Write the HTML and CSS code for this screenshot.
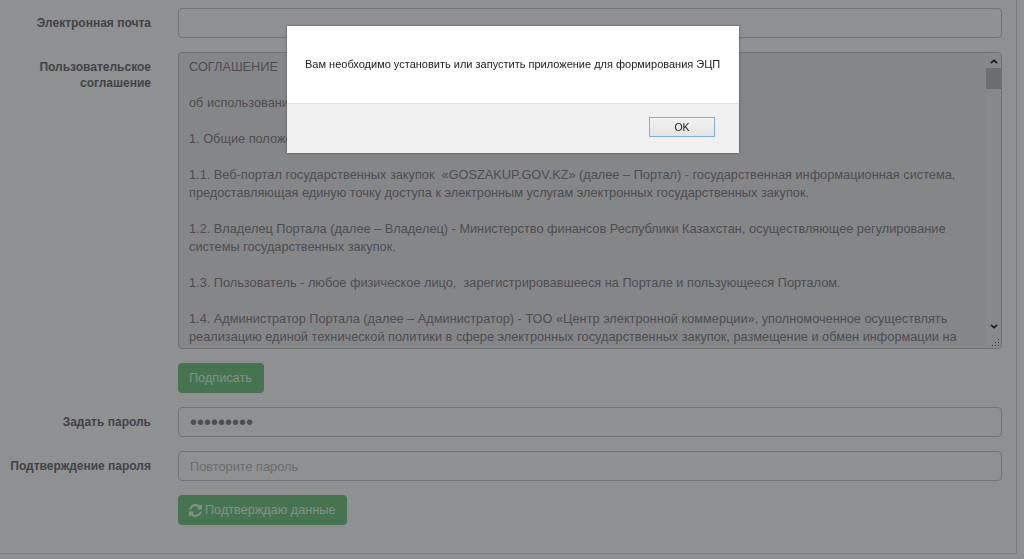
FILE: index.html
```html
<!DOCTYPE html>
<html lang="ru">
<head>
    <meta charset="UTF-8">
    <title>Регистрация</title>
    <link rel="stylesheet" href="styles.css">
</head>
<body>
    <div class="panel">
        <form class="regForm">

            <div class="formRow">
                <label class="rowLabel">Электронная почта</label>
                <input type="text" class="field">
            </div>

            <div class="formRow">
                <label class="rowLabel">Пользовательское соглашение</label>
                <div class="agreement">
                    <div class="agreementText">
                        <p>СОГЛАШЕНИЕ</p>
                        <p>об использовании веб-портала государственных закупок</p>
                        <p>1. Общие положения</p>
                        <p>1.1. Веб-портал государственных закупок &nbsp;«GOSZAKUP.GOV.KZ» (далее – Портал) - государственная информационная система, предоставляющая единую точку доступа к электронным услугам электронных государственных закупок.</p>
                        <p>1.2. Владелец Портала (далее – Владелец) - Министерство финансов Республики Казахстан, осуществляющее регулирование системы государственных закупок.</p>
                        <p>1.3. Пользователь - любое физическое лицо, &nbsp;зарегистрировавшееся на Портале и пользующееся Порталом.</p>
                        <p>1.4. Администратор Портала (далее – Администратор) - ТОО «Центр электронной коммерции», уполномоченное осуществлять реализацию единой технической политики в сфере электронных государственных закупок, размещение и обмен информации на</p>
                    </div>
                    <div class="scrollBar">
                        <svg class="scrollArrow" viewBox="0 0 10 6"><path d="M1 5l4-3.5L9 5" fill="none" stroke="#333" stroke-width="2"/></svg>
                        <div class="scrollThumb"></div>
                        <svg class="scrollArrow arrowDown" viewBox="0 0 10 6"><path d="M1 1l4 3.5L9 1" fill="none" stroke="#333" stroke-width="2"/></svg>
                        <svg class="resizeGrip" viewBox="0 0 9 9"><path d="M7 1h1v1H7zM4 4h1v1H4zM7 4h1v1H7zM1 7h1v1H1zM4 7h1v1H4zM7 7h1v1H7z" fill="#666"/></svg>
                    </div>
                </div>
            </div>

            <div class="formRow">
                <span class="rowLabel"></span>
                <button type="button" class="btnGreen">Подписать</button>
            </div>

            <div class="formRow">
                <label class="rowLabel">Задать пароль</label>
                <input type="password" class="field fieldSecret" value="123456789">
            </div>

            <div class="formRow">
                <label class="rowLabel">Подтверждение пароля</label>
                <input type="password" class="field" placeholder="Повторите пароль">
            </div>

            <div class="formRow">
                <span class="rowLabel"></span>
                <button type="button" class="btnGreen">
                    <svg class="refreshIcon" viewBox="0 0 1536 1536"><path fill="currentColor" d="M1511 928q0 5-1 7-64 268-268 434.5t-478 166.5q-146 0-282.5-55t-243.5-157l-129 129q-19 19-45 19t-45-19-19-45v-448q0-26 19-45t45-19h448q26 0 45 19t19 45-19 45l-137 137q71 66 161 102t187 36q134 0 250-65t186-179q11-17 53-117 8-23 30-23h192q13 0 22.5 9.5t9.5 22.5zm25-800v448q0 26-19 45t-45 19h-448q-26 0-45-19t-19-45 19-45l138-138q-148-137-349-137-134 0-250 65t-186 179q-11 17-53 117-8 23-30 23h-199q-13 0-22.5-9.5t-9.5-22.5v-7q65-268 270-434.5t480-166.5q146 0 284 55.5t245 156.5l130-129q19-19 45-19t45 19 19 45z"/></svg>
                    Подтверждаю данные
                </button>
            </div>

        </form>
    </div>

    <div class="backdrop"></div>

    <div class="modal">
        <div class="modalBody">Вам необходимо установить или запустить приложение для формирования ЭЦП</div>
        <div class="modalFooter">
            <button type="button" class="btnOk">OK</button>
        </div>
    </div>
</body>
</html>
```

FILE: styles.css
```css
* {
    box-sizing: border-box;
}

html, body {
    margin: 0;
    padding: 0;
    height: 100%;
    overflow: hidden;
}

body {
    background-color: #fff;
    font-family: "Liberation Sans", Arial, sans-serif;
    font-size: 12.75px;
    color: #8a8a8a;
}

.panel {
    width: 1017px;
    height: 554px;
    border-right: 1px solid #d8dadd;
    border-bottom: 1px solid #d8dadd;
}

.regForm {
    display: flex;
    flex-direction: column;
    gap: 14px;
    padding-top: 8px;
}

.formRow {
    display: flex;
    align-items: flex-start;
    gap: 27px;
    width: 1002px;
}

.rowLabel {
    flex: 0 0 151px;
    padding-top: 7px;
    text-align: right;
    font-weight: bold;
    font-size: 12px;
    line-height: 16px;
    color: #777;
}

.field {
    flex: 1;
    height: 30px;
    padding: 0 11px;
    border: 1px solid #ccc;
    border-radius: 4px;
    background-color: #fff;
    font-family: inherit;
    font-size: 12.75px;
    color: #8a8a8a;
}

.fieldSecret {
    font-size: 20px;
}

.field::placeholder {
    color: #c0c0c0;
}

.agreement {
    flex: 1;
    display: flex;
    height: 297px;
    overflow: hidden;
    border: 1px solid #c4c4c4;
    border-radius: 4px;
    background-color: #eee;
}

.agreementText {
    flex: 1;
    padding: 5px 15px 0 10px;
    overflow: hidden;
    line-height: 18px;
}

.agreementText p {
    margin: 0 0 18px;
}

.scrollBar {
    position: relative;
    flex: 0 0 15px;
    display: flex;
    flex-direction: column;
    align-items: center;
    background-color: #f1f1f1;
}

.scrollArrow {
    width: 8px;
    height: 5px;
    margin: 6px 0 4px;
}

.scrollThumb {
    width: 100%;
    height: 21px;
    background-color: #c1c1c1;
}

.arrowDown {
    margin-top: auto;
    margin-bottom: 19px;
}

.resizeGrip {
    position: absolute;
    right: 1px;
    bottom: 1px;
    width: 9px;
    height: 9px;
}

.btnGreen {
    display: flex;
    align-items: center;
    gap: 3px;
    height: 30px;
    padding: 0 12px 0 11px;
    border: none;
    border-radius: 4px;
    background-color: #7ecb8a;
    font-family: inherit;
    font-size: 12.7px;
    color: #e8ffec;
}

.refreshIcon {
    width: 13px;
    height: 13px;
}

.backdrop {
    position: fixed;
    inset: 0;
    background-color: rgba(0, 3, 6, 0.44);
}

.modal {
    position: fixed;
    top: 26px;
    left: 287px;
    width: 452px;
    height: 127px;
    display: flex;
    flex-direction: column;
    background-color: #fff;
    box-shadow: 0 0 2px rgba(0, 0, 0, 0.5);
}

.modalBody {
    flex: 0 0 77px;
    padding: 30px 18px 0;
    font-size: 11px;
    line-height: 16px;
    color: #222;
    white-space: nowrap;
}

.modalFooter {
    flex: 1;
    display: flex;
    justify-content: flex-end;
    align-items: flex-start;
    padding: 13px 24px 0 0;
    background-color: #f0f0f0;
    border-top: 1px solid #e6e6e6;
}

.btnOk {
    width: 66px;
    height: 20px;
    padding: 0;
    border: 1px solid #7fb2d6;
    background: linear-gradient(#f2f2f2, #e4e4e4);
    font-family: inherit;
    font-size: 10.5px;
    color: #222;
}
```
